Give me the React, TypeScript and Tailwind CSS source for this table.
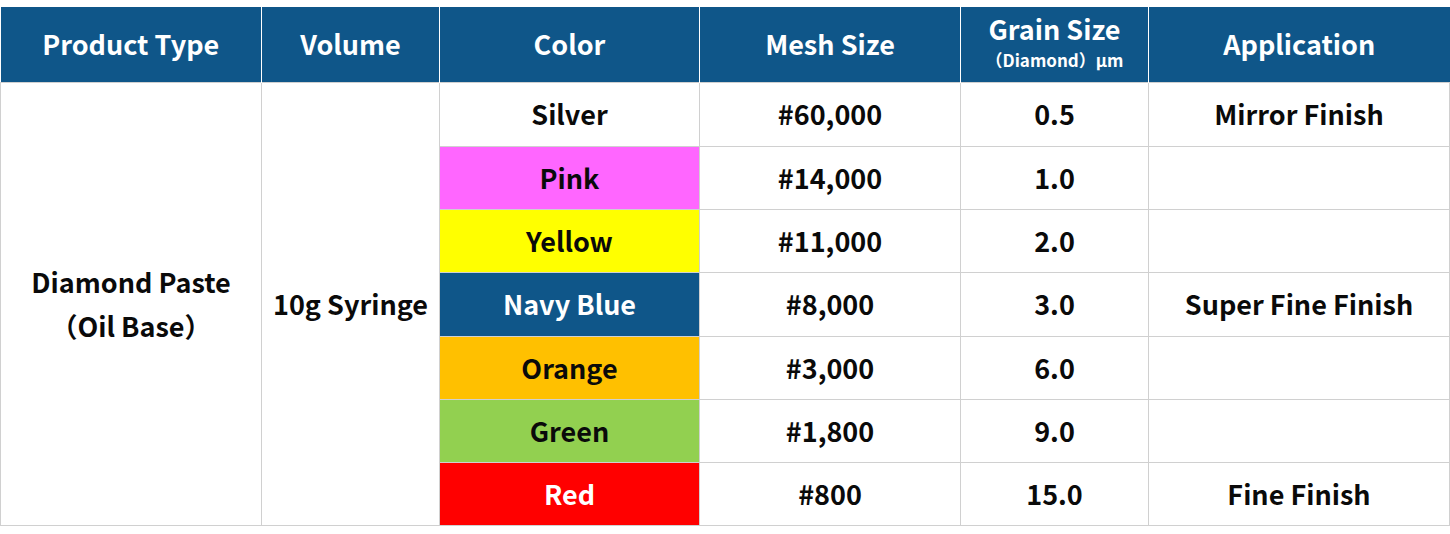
import React from "react";

const font = { fontFamily: '"Noto Sans CJK JP", "Noto Sans", sans-serif' };

type Row = { color: string; bg: string; fg: string; mesh: string; grain: string; app: string; h: string };

const rows: Row[] = [
  { color: "Silver", bg: "bg-white", fg: "text-black", mesh: "#60,000", grain: "0.5", app: "Mirror Finish", h: "h-[64px]" },
  { color: "Pink", bg: "bg-[#ff66ff]", fg: "text-black", mesh: "#14,000", grain: "1.0", app: "", h: "h-[63px]" },
  { color: "Yellow", bg: "bg-[#ffff00]", fg: "text-black", mesh: "#11,000", grain: "2.0", app: "", h: "h-[63px]" },
  { color: "Navy Blue", bg: "bg-[#0f5689]", fg: "text-white", mesh: "#8,000", grain: "3.0", app: "Super Fine Finish", h: "h-[64px]" },
  { color: "Orange", bg: "bg-[#ffc000]", fg: "text-black", mesh: "#3,000", grain: "6.0", app: "", h: "h-[63px]" },
  { color: "Green", bg: "bg-[#92d050]", fg: "text-black", mesh: "#1,800", grain: "9.0", app: "", h: "h-[63px]" },
  { color: "Red", bg: "bg-[#ff0000]", fg: "text-white", mesh: "#800", grain: "15.0", app: "Fine Finish", h: "h-[63px]" },
];

const td = "border border-[#d0d0d0] text-center align-middle p-0";

export default function App() {
  return (
    <div className="bg-white w-[1450px] h-[534px] pt-[7px]" style={font}>
      <table className="border-collapse table-fixed w-[1449px] text-[27px] font-semibold leading-tight text-[#0a0a0a]">
        <colgroup>
          <col className="w-[261px]" />
          <col className="w-[178px]" />
          <col className="w-[260px]" />
          <col className="w-[261px]" />
          <col className="w-[188px]" />
          <col className="w-[301px]" />
        </colgroup>
        <thead>
          <tr className="h-[75px] bg-[#0f5689] text-white">
            <th className="border-r border-white font-semibold p-0">Product Type</th>
            <th className="border-x border-white font-semibold p-0">Volume</th>
            <th className="border-x border-white font-semibold p-0">Color</th>
            <th className="border-x border-white font-semibold p-0">Mesh Size</th>
            <th className="border-x border-white font-semibold p-0">
              <div className="flex flex-col items-center">
                <span className="leading-[32px]">Grain Size</span>
                <span className="text-[17px] leading-[30px]">（Diamond）μm</span>
              </div>
            </th>
            <th className="border-l border-white font-semibold p-0">Application</th>
          </tr>
        </thead>
        <tbody>
          {rows.map((r, i) => (
            <tr key={r.color} className={r.h}>
              {i === 0 && (
                <td rowSpan={7} className={td}>
                  <div className="leading-[44px]">Diamond Paste</div>
                  <div className="leading-[44px]">（Oil Base）</div>
                </td>
              )}
              {i === 0 && (
                <td rowSpan={7} className={td}>
                  10g Syringe
                </td>
              )}
              <td className={`${td} ${r.bg} ${r.fg === "text-white" ? "text-white" : "text-[#0a0a0a]"}`}>{r.color}</td>
              <td className={td}>{r.mesh}</td>
              <td className={td}>{r.grain}</td>
              <td className={td}>{r.app}</td>
            </tr>
          ))}
        </tbody>
      </table>
    </div>
  );
}
